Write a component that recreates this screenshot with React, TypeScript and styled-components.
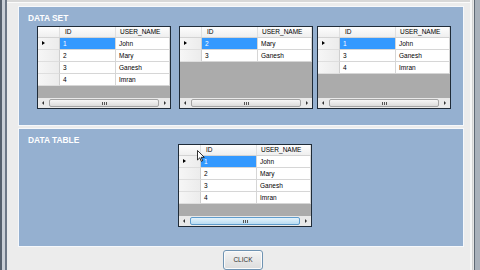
import React from "react";
import styled, { createGlobalStyle } from "styled-components";

const GlobalStyle = createGlobalStyle`
  html, body {
    margin: 0;
    padding: 0;
    background: #ececec;
  }
  #root {
    width: 480px;
    height: 270px;
    overflow: hidden;
  }
`;

type Row = { id: string; name: string };

const Window = styled.div`
  display: flex;
  width: 480px;
  height: 270px;
  background: #ececec;
  font-family: "Liberation Sans", Arial, sans-serif;
`;

const LeftFrame = styled.div`
  width: 7px;
  flex-shrink: 0;
  background: linear-gradient(
    to right,
    #56606c 0 2px,
    #c9ced5 2px 5px,
    #6d7785 5px 7px
  );
`;

const RightFrame = styled.div`
  width: 10px;
  flex-shrink: 0;
  background: linear-gradient(
    to right,
    #f7f7f7 0 2px,
    #d2d2d2 2px 3px,
    #e6e6e6 3px 4px,
    #5f6975 4px 5px,
    #a9b1bb 5px 10px
  );
`;

const Main = styled.div`
  flex: 1;
  display: flex;
  flex-direction: column;
  min-width: 0;
`;

const TopStrip = styled.div`
  height: 5px;
  background: #d8d8d8;
  border-bottom: 1px solid #fbfbfb;
`;

const Content = styled.div`
  flex: 1;
  display: flex;
  flex-direction: column;
  gap: 2px;
  padding: 3px 6px 0 11px;
`;

const Panel = styled.div<{ $h: number }>`
  height: ${(p) => p.$h}px;
  box-sizing: border-box;
  border: 1px solid #f6f8fb;
  background: #95b0d0;
  padding: 6px 0 0 9px;
`;

const PanelTitle = styled.div`
  color: #ffffff;
  font-weight: bold;
  font-size: 8.4px;
  line-height: 11px;
  height: 11px;
`;

const GridRow = styled.div`
  display: flex;
  margin-top: 2px;
  padding-left: 9px;
`;

const GridSlot = styled.div<{ $gap: number }>`
  margin-right: ${(p) => p.$gap}px;
`;

const TablePanelBody = styled.div`
  display: grid;
  grid-template-columns: 150px auto 1fr;
  align-items: start;
`;

const TableSlot = styled.div`
  position: relative;
  margin-top: 9px;
`;

const Grid = styled.div`
  width: 134px;
  box-sizing: border-box;
  border: 1px solid #1f2b38;
  background: #ababab;
  font-size: 6.5px;
  color: #000;
`;

const Cols = styled.div`
  display: grid;
  grid-template-columns: 22px 56px 1fr;
`;

const HeaderRow = styled(Cols)`
  height: 11px;
  box-sizing: border-box;
  background: linear-gradient(#fefefe, #efefef);
  border-bottom: 1px solid #d3d3d3;
`;

const HeaderCell = styled.div<{ $pad: number }>`
  border-right: 1px solid #e0e0e0;
  padding-left: ${(p) => p.$pad}px;
  line-height: 10px;
  white-space: nowrap;
  overflow: hidden;
`;

const Body = styled.div`
  height: 60px;
  background: #ababab;
`;

const DataRow = styled(Cols)`
  height: 12px;
`;

const RowHead = styled.div`
  position: relative;
  box-sizing: border-box;
  background: linear-gradient(to right, #f6f6f6, #ececec);
  border-right: 1px solid #cfcfcf;
  border-bottom: 1px solid #dedede;
`;

const Pointer = styled.span`
  position: absolute;
  left: 4px;
  top: 3px;
  width: 0;
  height: 0;
  border-top: 2.5px solid transparent;
  border-bottom: 2.5px solid transparent;
  border-left: 3.5px solid #000;
`;

const Cell = styled.div<{ $sel?: boolean }>`
  box-sizing: border-box;
  padding-left: 3px;
  line-height: 11px;
  background: ${(p) => (p.$sel ? "#3399ff" : "#ffffff")};
  color: ${(p) => (p.$sel ? "#ffffff" : "#000000")};
  border-right: 1px solid #d6d6d6;
  border-bottom: 1px solid #d6d6d6;
  white-space: nowrap;
  overflow: hidden;
`;

const ScrollBar = styled.div`
  display: flex;
  height: 10px;
  background: #e9e9e9;
  box-sizing: border-box;
`;

const ArrowBtn = styled.div<{ $dir: "left" | "right" }>`
  width: 10px;
  flex-shrink: 0;
  display: flex;
  align-items: center;
  justify-content: center;
  &::after {
    content: "";
    width: 0;
    height: 0;
    border-top: 2px solid transparent;
    border-bottom: 2px solid transparent;
    ${(p) =>
      p.$dir === "left"
        ? "border-right: 2px solid #333;"
        : "border-left: 2px solid #333;"}
  }
`;

const Thumb = styled.div<{ $active?: boolean }>`
  flex: 1;
  margin: 1px 1px;
  border-radius: 2px;
  border: 1px solid ${(p) => (p.$active ? "#5f9ccc" : "#a4a4a4")};
  background: ${(p) =>
    p.$active
      ? "linear-gradient(#e4f3fc, #b9dcf2)"
      : "linear-gradient(#f6f6f6, #dcdcdc)"};
  display: flex;
  align-items: center;
  justify-content: center;
  &::after {
    content: "";
    width: 5px;
    height: 3px;
    background: repeating-linear-gradient(
      to right,
      #555 0 1px,
      transparent 1px 2px
    );
  }
`;

const Cursor = styled.svg`
  position: absolute;
  left: 19px;
  top: 6px;
`;

const ButtonRow = styled.div`
  display: flex;
  justify-content: center;
  padding: 3px 0 0 9px;
`;

const Button = styled.div`
  width: 40px;
  height: 20px;
  box-sizing: border-box;
  border: 1px solid #6f93b2;
  border-radius: 3px;
  background: linear-gradient(#f4f4f4, #dcdcdc);
  box-shadow: inset 0 0 0 1px #fbfbfb;
  font-size: 6.5px;
  color: #333;
  text-align: center;
  line-height: 18px;
`;

function DataGrid({
  rows,
  activeScroll,
}: {
  rows: Row[];
  activeScroll?: boolean;
}) {
  return (
    <Grid>
      <HeaderRow>
        <HeaderCell $pad={0} />
        <HeaderCell $pad={5}>ID</HeaderCell>
        <HeaderCell $pad={4}>USER_NAME</HeaderCell>
      </HeaderRow>
      <Body>
        {rows.map((r, i) => (
          <DataRow key={r.id}>
            <RowHead>{i === 0 && <Pointer />}</RowHead>
            <Cell $sel={i === 0}>{r.id}</Cell>
            <Cell>{r.name}</Cell>
          </DataRow>
        ))}
      </Body>
      <ScrollBar>
        <ArrowBtn $dir="left" />
        <Thumb $active={activeScroll} />
        <ArrowBtn $dir="right" />
      </ScrollBar>
    </Grid>
  );
}

const all: Row[] = [
  { id: "1", name: "John" },
  { id: "2", name: "Mary" },
  { id: "3", name: "Ganesh" },
  { id: "4", name: "Imran" },
];

export default function App() {
  return (
    <>
      <GlobalStyle />
      <Window>
        <LeftFrame />
        <Main>
          <TopStrip />
          <Content>
            <Panel $h={120}>
              <PanelTitle>DATA SET</PanelTitle>
              <GridRow>
                <GridSlot $gap={8}>
                  <DataGrid rows={all} />
                </GridSlot>
                <GridSlot $gap={4}>
                  <DataGrid rows={[all[1], all[2]]} />
                </GridSlot>
                <GridSlot $gap={0}>
                  <DataGrid rows={[all[0], all[2], all[3]]} />
                </GridSlot>
              </GridRow>
            </Panel>
            <Panel $h={119}>
              <TablePanelBody>
                <PanelTitle>DATA TABLE</PanelTitle>
                <TableSlot>
                  <DataGrid rows={all} activeScroll />
                  <Cursor width="8" height="12" viewBox="0 0 8 12">
                    <path
                      d="M0.5 0.5 L0.5 10 L2.8 7.8 L4.3 11.3 L5.6 10.7 L4.2 7.3 L7.3 7.3 Z"
                      fill="#ffffff"
                      stroke="#000000"
                      strokeWidth="0.8"
                      strokeLinejoin="round"
                    />
                  </Cursor>
                </TableSlot>
              </TablePanelBody>
            </Panel>
          </Content>
          <ButtonRow>
            <Button>CLICK</Button>
          </ButtonRow>
        </Main>
        <RightFrame />
      </Window>
    </>
  );
}
